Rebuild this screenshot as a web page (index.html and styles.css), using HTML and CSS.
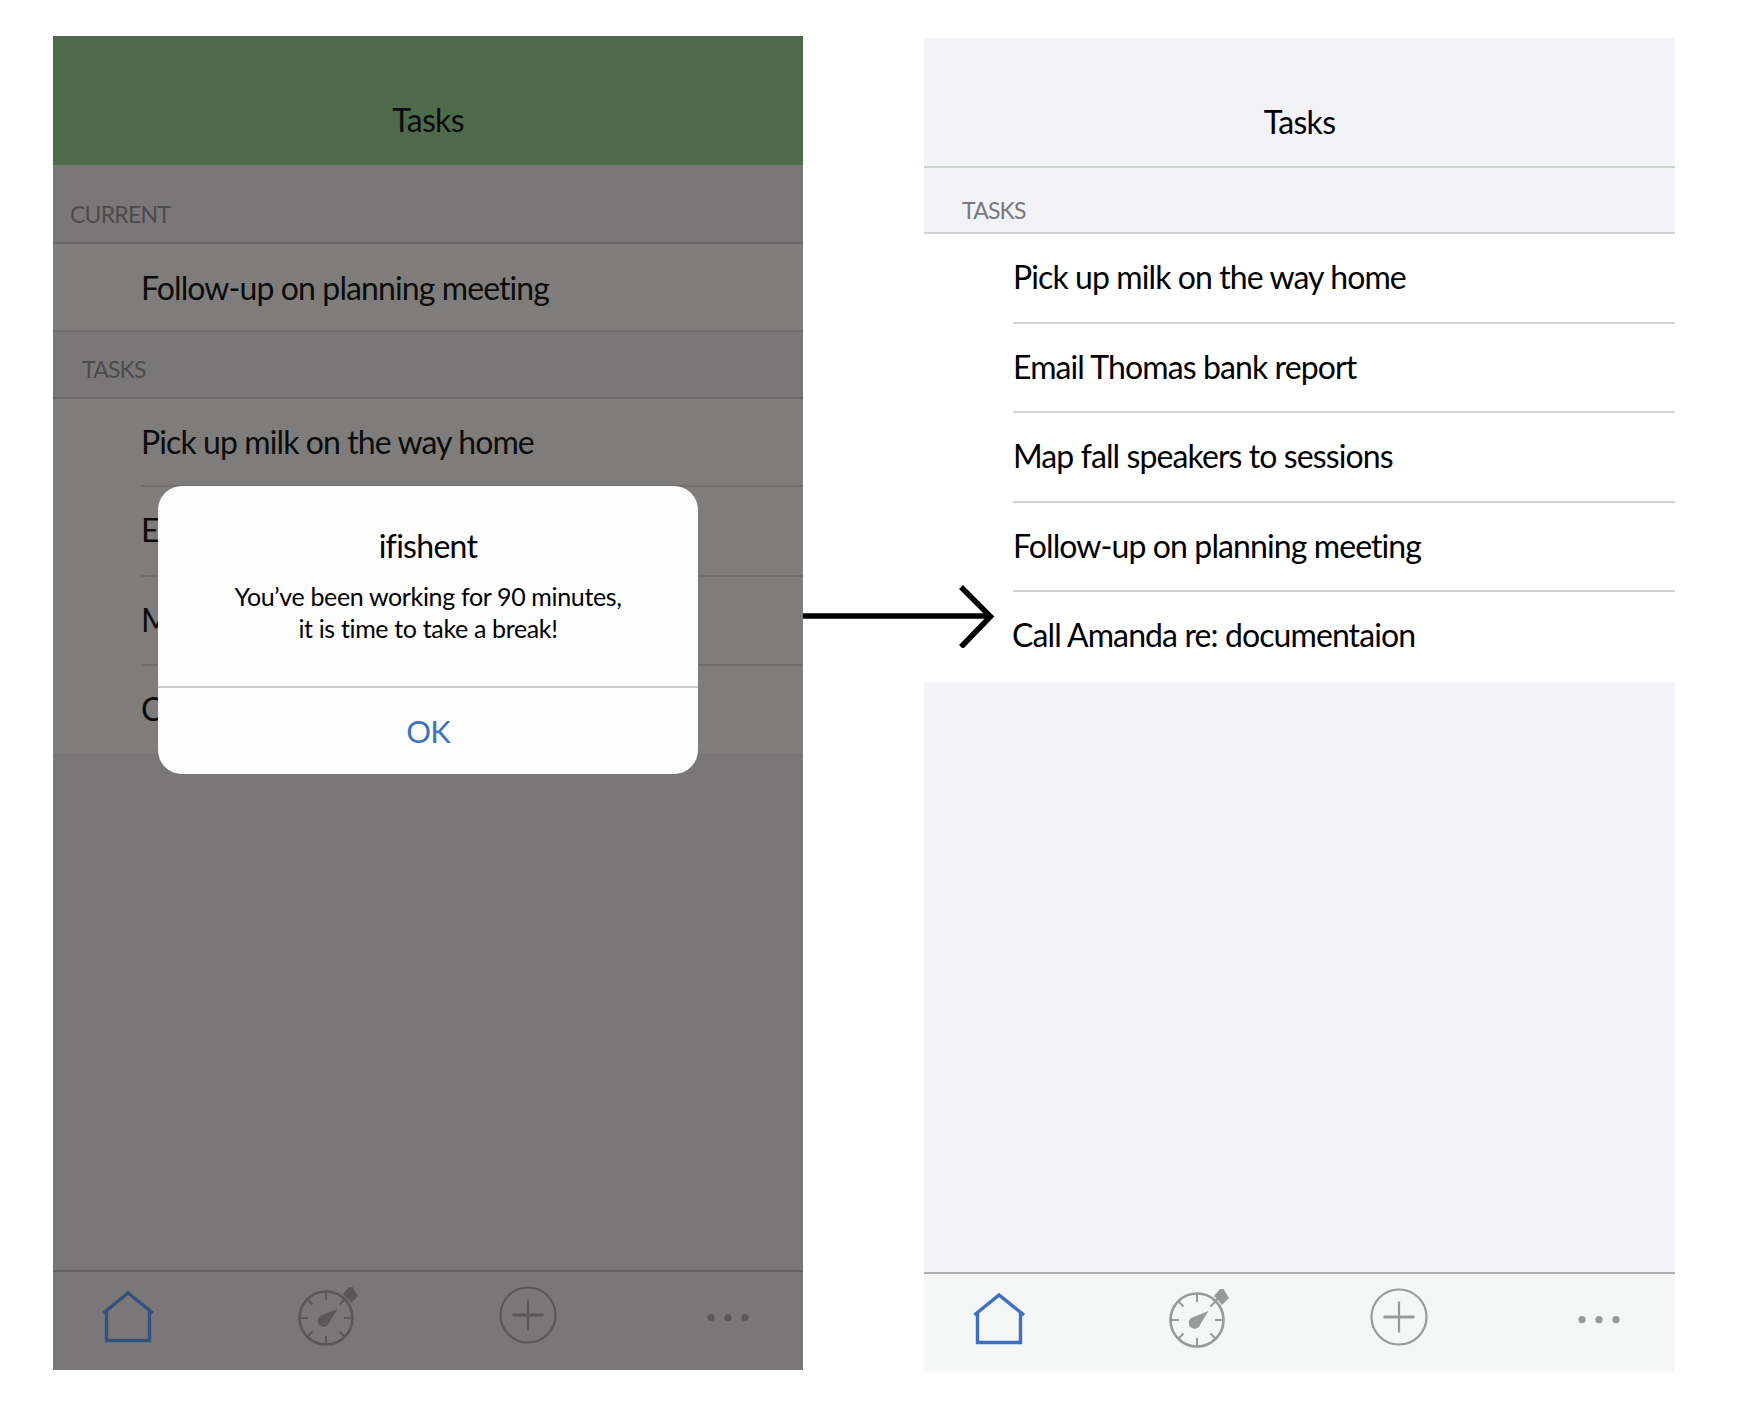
FILE: index.html
```html
<!DOCTYPE html>
<html lang="en">
<head>
<meta charset="utf-8">
<title>Tasks</title>
<link rel="stylesheet" href="styles.css">
</head>
<body>
<svg class="defs" width="0" height="0" aria-hidden="true">
  <symbol id="i-home" viewBox="0 0 150 100">
    <path d="M50.5 43 L75 23 L100 43 M53.5 41 V70.5 H96.5 V41" fill="none" stroke="currentColor" stroke-width="3.4"/>
  </symbol>
  <symbol id="i-timer" viewBox="0 0 150 100">
    <circle cx="73" cy="48" r="26.5" fill="none" stroke="currentColor" stroke-width="2.6"/>
    <path d="M73 21.5V30M73 66V74.5M46.5 48H55M91 48H99.5M54.3 29.3L59.5 34.5M86.5 61.5L91.7 66.7M54.3 66.7L59.5 61.5M86.5 34.5L90 31L96 23" fill="none" stroke="currentColor" stroke-width="2"/>
    <path d="M84.5 39 L76.5 52 A6 6 0 1 1 67 46 Z" fill="currentColor"/>
    <path d="M96 17 L99.5 17 L105 26 L98 33 L90 24 Z" fill="currentColor"/>
  </symbol>
  <symbol id="i-plus" viewBox="0 0 150 100">
    <circle cx="75" cy="45" r="27.5" fill="none" stroke="currentColor" stroke-width="2.2"/>
    <path d="M59.5 45H90.5" fill="none" stroke="currentColor" stroke-width="3"/>
    <path d="M75 29.5V60.5" fill="none" stroke="currentColor" stroke-width="2.2"/>
  </symbol>
  <symbol id="i-more" viewBox="0 0 150 100">
    <circle cx="58" cy="47.7" r="3.6" fill="currentColor"/>
    <circle cx="75" cy="47.7" r="3.6" fill="currentColor"/>
    <circle cx="92" cy="47.7" r="3.6" fill="currentColor"/>
  </symbol>
</svg>

<main class="stage">
  <section class="phone phone-dim">
    <header class="nav"><h1 class="nav-title">Tasks</h1></header>
    <div class="list">
      <h2 class="section section-current">CURRENT</h2>
      <div class="row row-full row-current">Follow-up on planning meeting</div>
      <h2 class="section section-tasks">TASKS</h2>
      <div class="row row-short">Pick up milk on the way home</div>
      <div class="row">Email Thomas bank report</div>
      <div class="row">Map fall speakers to sessions</div>
      <div class="row row-last">Call Amanda re: documentaion</div>
    </div>
    <nav class="tabs">
      <svg class="tab tab-active"><use href="#i-home"/></svg>
      <svg class="tab"><use href="#i-timer"/></svg>
      <svg class="tab"><use href="#i-plus"/></svg>
      <svg class="tab"><use href="#i-more"/></svg>
    </nav>
    <div class="alert">
      <div class="alert-body">
        <h3 class="alert-title">ifishent</h3>
        <p class="alert-text">You’ve been working for 90 minutes,<br>it is time to take a break!</p>
      </div>
      <div class="alert-action">OK</div>
    </div>
  </section>

  <section class="phone phone-light">
    <header class="nav"><h1 class="nav-title">Tasks</h1></header>
    <div class="list">
      <h2 class="section section-solo">TASKS</h2>
      <div class="row">Pick up milk on the way home</div>
      <div class="row">Email Thomas bank report</div>
      <div class="row">Map fall speakers to sessions</div>
      <div class="row">Follow-up on planning meeting</div>
      <div class="row row-last row-call">Call Amanda re: documentaion</div>
    </div>
    <nav class="tabs">
      <svg class="tab tab-active"><use href="#i-home"/></svg>
      <svg class="tab"><use href="#i-timer"/></svg>
      <svg class="tab"><use href="#i-plus"/></svg>
      <svg class="tab"><use href="#i-more"/></svg>
    </nav>
  </section>

  <svg class="arrow" width="192" height="64" viewBox="0 0 192 64" aria-hidden="true">
    <path d="M0 32H186" fill="none" stroke="#000" stroke-width="5.5"/>
    <path d="M158 3 L187.5 32.5 L158 63" fill="none" stroke="#000" stroke-width="5.5"/>
  </svg>
</main>
</body>
</html>
```
FILE: styles.css
```css
* { box-sizing: border-box; }
html, body { margin: 0; padding: 0; background: #fff; }
body { font-family: Lato, "Open Sans", sans-serif; color: #000; }
.defs { position: absolute; }
.stage {
  position: relative;
  display: flex;
  align-items: flex-start;
  gap: 121px;
  width: 1737px;
  height: 1423px;
  padding: 36px 0 0 53px;
}
.phone {
  position: relative;
  display: flex;
  flex-direction: column;
  flex: none;
  width: 750px;
  height: 1334px;
}
.phone-light { margin-top: 2px; width: 751px; background: #f2f2f7; color: #000; }
.phone-dim { background: #7a7778; color: #0c0c0c; }
.nav {
  display: flex;
  flex: none;
  align-items: flex-end;
  justify-content: center;
  height: 129px;
  padding-bottom: 24px;
}
.phone-dim .nav { background: #4d6b4a; }
.phone-light .nav { height: 130px; padding-bottom: 23px; border-bottom: 2px solid #c5dbc3; }
.nav-title, .alert-title {
  margin: 0;
  font-size: 32px;
  font-weight: 400;
  letter-spacing: -0.7px;
  line-height: 42px;
}
.list { flex: 1; display: flex; flex-direction: column; }
.section {
  display: flex;
  align-items: flex-end;
  margin: 0;
  font-size: 23px;
  font-weight: 400;
  letter-spacing: -0.8px;
  line-height: 30px;
  padding-bottom: 13px;
  border-bottom: 2px solid;
}
.phone-dim .section { color: #4c4b4b; border-color: #6b696a; }
.phone-light .section { color: #77777c; border-color: #d3d3d8; }
.section-current { height: 79px; padding-left: 17px; }
.section-tasks { height: 67px; padding-left: 29px; }
.section-solo { height: 66px; padding-left: 38px; padding-bottom: 7px; }
.row {
  position: relative;
  display: flex;
  align-items: center;
  height: 89.5px;
  padding-left: 88px;
  padding-bottom: 4px;
  font-size: 32px;
  letter-spacing: -0.9px;
}
.row::after {
  content: "";
  position: absolute;
  left: 88px;
  right: 0;
  bottom: 0;
  height: 2px;
}
.phone-dim .row { background: #7e7d7b; }
.phone-dim .row::after { background: #706f6d; }
.phone-light .row { background: #fff; padding-left: 89px; }
.phone-light .row::after { left: 89px; background: #d4d4d6; }
.phone-dim .row-full::after { left: 0; }
.row-current { height: 88px; padding-bottom: 2px; }
.row-short { height: 88px; }
.phone-dim .row-last::after { left: 0; background: #777573; }
.phone-light .row-last::after { display: none; }
.phone-light .row-call { padding-left: 88px; }
.tabs {
  display: grid;
  flex: none;
  grid-template-columns: repeat(4, 150px);
  gap: 50px;
  height: 100px;
  border-top: 2px solid;
}
.phone-dim .tabs { color: #5a5859; background: #7a7778; border-color: #636162; }
.phone-light .tabs { color: #999a9a; background: #f5f6f6; border-color: #aeaeb1; }
.tab { width: 150px; height: 100px; margin-top: -2px; }
.phone-dim .tab-active { color: #35507c; }
.phone-light .tab-active { color: #3f6fbf; }
.alert {
  position: absolute;
  top: 450px;
  left: 105px;
  display: flex;
  flex-direction: column;
  width: 540px;
  height: 288px;
  background: #fbfcfb;
  border-radius: 24px;
  color: #000;
  text-align: center;
}
.alert-body {
  flex: none;
  height: 202px;
  padding-top: 39px;
  border-bottom: 2px solid #c9cbcb;
}
.alert-text {
  margin: 13px 0 0;
  font-size: 25px;
  letter-spacing: -0.35px;
  line-height: 32px;
}
.alert-action {
  display: flex;
  flex: 1;
  align-items: center;
  justify-content: center;
  font-size: 31px;
  letter-spacing: -1px;
  color: #4272bb;
}
.arrow { position: absolute; left: 803px; top: 584px; }
```
